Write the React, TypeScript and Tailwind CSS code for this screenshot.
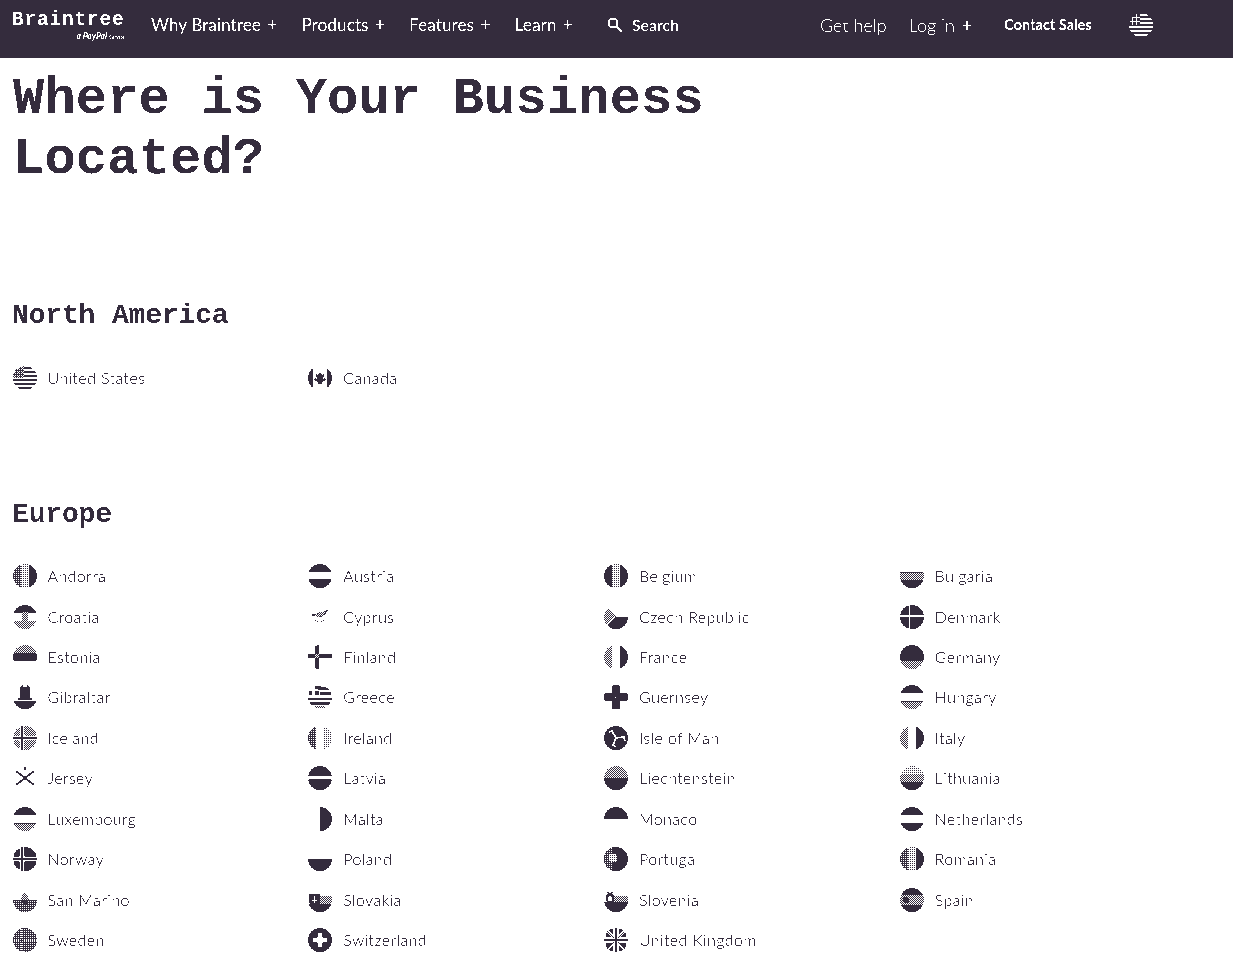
import React from 'react';

const D = '#342c3e';
const DOTS = 'url(#dots)';
const DENSE = 'url(#dense)';
const HEAVY = 'url(#heavy)';

const europe = [
  'Andorra', 'Austria', 'Belgium', 'Bulgaria',
  'Croatia', 'Cyprus', 'Czech Republic', 'Denmark',
  'Estonia', 'Finland', 'France', 'Germany',
  'Gibraltar', 'Greece', 'Guernsey', 'Hungary',
  'Iceland', 'Ireland', 'Isle of Man', 'Italy',
  'Jersey', 'Latvia', 'Liechtenstein', 'Lithuania',
  'Luxembourg', 'Malta', 'Monaco', 'Netherlands',
  'Norway', 'Poland', 'Portugal', 'Romania',
  'San Marino', 'Slovakia', 'Slovenia', 'Spain',
  'Sweden', 'Switzerland', 'United Kingdom',
];

// horizontal / vertical tricolours, fills listed in order
const H = (a: string, b: string, c: string) => (
  <>
    <rect width="24" height="8" fill={a} />
    <rect y="8" width="24" height="8" fill={b} />
    <rect y="16" width="24" height="8" fill={c} />
  </>
);
const V = (a: string, b: string, c: string) => (
  <>
    <rect width="8" height="24" fill={a} />
    <rect x="8" width="8" height="24" fill={b} />
    <rect x="16" width="8" height="24" fill={c} />
  </>
);
const W = 'none';

const flags: Record<string, React.ReactNode> = {
  'United States': (
    <>
      {[0, 4, 8, 12, 16, 20].map((y) => <rect key={y} x={y < 10 ? 11 : 0} y={y + 1} width="24" height="2" fill={D} />)}
      <rect width="11" height="12" fill={DENSE} />
      <path d="M0 4.500h11M0 8.500h11M3.500 0v12M7.500 0v12" stroke={D} strokeWidth="1" />
    </>
  ),
  Canada: (
    <>
      <rect width="5" height="24" fill={D} />
      <rect x="19" width="5" height="24" fill={D} />
      <path d="M12 6l2 3 2-1-1 5 2-1 1 2-4 2v2h-4v-2l-4-2 1-2 2 1-1-5 2 1z" fill={D} />
    </>
  ),
  Andorra: V(HEAVY, DOTS, D),
  Austria: <><rect width="24" height="7.500" fill={D} /><rect y="15.500" width="24" height="9" fill={D} /></>,
  Belgium: V(D, DOTS, D),
  Bulgaria: <>{H(W, DENSE, D)}<path d="M0 8.500h24" stroke={D} /></>,
  Croatia: (
    <>
      {H(D, W, DENSE)}
      <path d="M9 7h6v9l-3 3-3-3z" fill="#fff" />
      <path d="M9 7h6v9l-3 3-3-3z" fill={DENSE} />
    </>
  ),
  Cyprus: <path d="M4 10l5-1 3-2 4 0 4-2-3 4-3 2-3 1-3-1zM7 15l3 2M16 15l-3 2" fill={DENSE} stroke={D} strokeWidth="0.7" />,
  'Czech Republic': (
    <>
      <rect y="12" width="24" height="12" fill={D} />
      <path d="M0 0l12 12L0 24z" fill="#fff" />
      <path d="M0 0l12 12H0z" fill={DENSE} />
      <path d="M0 12h9L0 21z" fill={DENSE} />
    </>
  ),
  Denmark: <><rect width="24" height="24" fill={D} /><path d="M9.500 0v24M0 11h24" stroke="#fff" strokeWidth="2" /></>,
  Estonia: H(DENSE, D, W),
  Finland: (
    <>
      <path d="M9 0v24M0 11h24" stroke={D} strokeWidth="4" />
      <rect x="7" y="9" width="4" height="4" fill="#fff" />
      <rect x="7" y="9" width="4" height="4" fill={DENSE} />
    </>
  ),
  France: V(DENSE, W, D),
  Germany: <><rect width="24" height="16" fill={D} /><rect y="16" width="24" height="8" fill={DENSE} /></>,
  Gibraltar: (
    <>
      <path d="M8 0h2v2h4V0h2v2h1v12H7V2h1z" fill={D} />
      <path d="M5 13h14v2H5z" fill={D} />
      <rect y="16" width="24" height="8" fill={D} />
      <path d="M12 16v4" stroke="#fff" strokeWidth="1" />
    </>
  ),
  Greece: (
    <>
      <path d="M10 3.500h14M12 8.500h12M0 14h24M0 18.500h24" stroke={D} strokeWidth="2" />
      <path d="M7 1h6v3H7zM1 6h3v4H1zM7 6h4v4H7z" fill={D} />
      <rect x="7" y="21" width="10" height="2" fill={DENSE} />
    </>
  ),
  Guernsey: (
    <>
      <path d="M8 0h8v8h8v8h-8v8H8v-8H0V8h8z" fill={D} />
      <path d="M12 2v20M3 12h18" stroke="#fff" strokeWidth="1" strokeDasharray="1 1" />
    </>
  ),
  Hungary: <>{H(D, W, DENSE)}<path d="M0 16.500h24" stroke={D} /></>,
  Iceland: (
    <>
      <rect width="24" height="24" fill={DENSE} />
      <path d="M9 0v24M0 12h24" stroke="#fff" strokeWidth="5" />
      <path d="M9 0v24M0 12h24" stroke={D} strokeWidth="2.600" />
    </>
  ),
  Ireland: V(HEAVY, W, DOTS),
  'Isle of Man': (
    <>
      <rect width="24" height="24" fill={D} />
      <path d="M12 12L8 5l-3 1M12 12l8-1 1 4M12 12l-3 7 3 2" stroke="#fff" strokeWidth="1.700" fill="none" />
    </>
  ),
  Italy: V(DENSE, W, D),
  Jersey: (
    <>
      <path d="M3 5l18 14M21 5L3 19" stroke={D} strokeWidth="1.600" />
      <path d="M11 1h2v3h-2z" fill={D} />
    </>
  ),
  Latvia: <><rect width="24" height="9.700" fill={D} /><rect y="13.500" width="24" height="11" fill={D} /></>,
  Liechtenstein: <><rect width="24" height="12" fill={DENSE} /><rect y="12" width="24" height="12" fill={D} /></>,
  Lithuania: H(DOTS, DENSE, D),
  Luxembourg: <>{H(D, W, DENSE)}<path d="M0 16.500h24" stroke={D} /></>,
  Malta: <rect x="12" width="12" height="24" fill={D} />,
  Monaco: <rect width="24" height="12" fill={D} />,
  Netherlands: H(D, W, D),
  Norway: (
    <>
      <rect width="24" height="24" fill={D} />
      <path d="M9 0v24M0 12h24" stroke="#fff" strokeWidth="5" />
      <path d="M9 0v24M0 12h24" stroke={D} strokeWidth="2.400" />
    </>
  ),
  Poland: <rect y="12" width="24" height="12" fill={D} />,
  Portugal: (
    <>
      <rect width="24" height="24" fill={D} />
      <rect width="9" height="24" fill="#fff" />
      <rect width="9" height="24" fill={HEAVY} />
      <circle cx="9" cy="11" r="4.500" fill="#fff" />
      <circle cx="9" cy="11" r="4.500" fill={DOTS} />
    </>
  ),
  Romania: V(HEAVY, DOTS, D),
  'San Marino': (
    <>
      <rect y="12" width="24" height="12" fill={HEAVY} />
      <path d="M12 5l3 3 1 4-4 6-4-6 1-4z" fill={DENSE} />
    </>
  ),
  Slovakia: (
    <>
      <rect y="8" x="10" width="14" height="8" fill={DENSE} />
      <rect y="16" width="24" height="8" fill={D} />
      <path d="M1 6h11v9l-5.500 4L1 15z" fill={D} />
      <path d="M6.500 8v7M4 10h5M4 12.500h5" stroke="#fff" strokeWidth="1" />
    </>
  ),
  Slovenia: (
    <>
      <rect y="8" x="8" width="16" height="8" fill={DENSE} />
      <rect y="14" width="24" height="10" fill={D} />
      <circle cx="6" cy="10" r="4.500" fill={D} />
      <path d="M3 4l3 2 3-2" stroke={D} fill="none" />
      <circle cx="6" cy="10.500" r="2.500" fill="#fff" />
    </>
  ),
  Spain: (
    <>
      <rect width="24" height="6.500" fill={D} />
      <rect y="6.500" width="24" height="11" fill={DENSE} />
      <rect y="17.500" width="24" height="7" fill={D} />
      <circle cx="6" cy="12" r="3" fill={D} />
    </>
  ),
  Sweden: (
    <>
      <rect width="24" height="24" fill={HEAVY} />
      <path d="M9 0v24M0 12h24" stroke="#fff" strokeWidth="3" />
      <path d="M9 0v24M0 12h24" stroke={D} strokeWidth="3" strokeDasharray="1 1" />
    </>
  ),
  Switzerland: (
    <>
      <rect width="24" height="24" fill={D} />
      <path d="M9.500 5h5v4.500H19v5h-4.500V19h-5v-4.500H5v-5h4.500z" fill="#fff" />
    </>
  ),
  'United Kingdom': (
    <>
      <path d="M0 0l24 24M24 0L0 24" stroke={D} strokeWidth="1" />
      <path d="M2 3l6 6H2zM22 3l-6 6h6zM2 21l6-6H2zM22 21l-6-6h6zM9 1v6L4 1zM15 1v6l5-6zM9 23v-6l-5 6zM15 23v-6l5 6z" fill={D} />
      <path d="M12 0v24M0 12h24" stroke="#fff" strokeWidth="4" />
      <path d="M12 0v24M0 12h24" stroke={D} strokeWidth="2" />
    </>
  ),
};

const Flag = ({ name }: { name: string }) => {
  const id = 'clip-' + name.replace(/\s/g, '');
  return (
    <svg viewBox="0 0 24 24" width="24" height="24" className="shrink-0">
      <clipPath id={id}>
        <circle cx="12" cy="12" r="12" />
      </clipPath>
      <g clipPath={`url(#${id})`}>{flags[name]}</g>
    </svg>
  );
};

const Country = ({ name }: { name: string }) => (
  <a href="#" className="flex h-[40.45px] items-center gap-[11px] pl-[0.5px] text-[16px] font-light tracking-[0.4px] text-[#342c3e]">
    <Flag name={name} />
    <span>{name}</span>
  </a>
);

const NavItem = ({ label }: { label: string }) => (
  <a href="#" className="text-[17.300px] font-normal text-white">{label} <span className="ml-0.5">+</span></a>
);

export default function App() {
  return (
    <div className="min-h-[953px] overflow-hidden bg-white font-['Lato',sans-serif] [filter:url(#threshold)]">
      <svg width="0" height="0" className="absolute">
        <defs>
          <pattern id="dots" width="2" height="2" patternUnits="userSpaceOnUse">
            <rect width="1" height="1" fill={D} />
          </pattern>
          <pattern id="dense" width="2" height="2" patternUnits="userSpaceOnUse">
            <rect width="1" height="1" fill={D} />
            <rect x="1" y="1" width="1" height="1" fill={D} />
          </pattern>
          <pattern id="heavy" width="2" height="2" patternUnits="userSpaceOnUse">
            <rect width="2" height="1" fill={D} />
            <rect width="1" height="2" fill={D} />
          </pattern>
          {/* two-tone look of the reference */}
          <filter id="threshold" x="0" y="0" width="100%" height="100%" colorInterpolationFilters="sRGB">
            <feColorMatrix type="saturate" values="0" />
            <feComponentTransfer>
              <feFuncR type="discrete" tableValues="0.204 0.204 0.204 0.204 0.204 0.204 1 1 1 1" />
              <feFuncG type="discrete" tableValues="0.173 0.173 0.173 0.173 0.173 0.173 1 1 1 1" />
              <feFuncB type="discrete" tableValues="0.243 0.243 0.243 0.243 0.243 0.243 1 1 1 1" />
            </feComponentTransfer>
          </filter>
        </defs>
      </svg>

      <header className="flex h-[58px] items-center bg-[#342c3e] pb-2 pl-3 text-white">
        <div className="w-[139px] shrink-0">
          <div className="font-['Liberation_Mono',monospace] text-[19.500px] leading-[22px] font-bold tracking-[0.8px]">Braintree</div>
          <div className="w-[113px] text-right text-[8.500px] leading-[10px] font-bold"><i>a PayPal</i> <span className="text-[5px] font-normal">Service</span></div>
        </div>
        <nav className="flex gap-6">
          <NavItem label="Why Braintree" />
          <NavItem label="Products" />
          <NavItem label="Features" />
          <NavItem label="Learn" />
        </nav>
        <a href="#" className="ml-[34px] flex items-center gap-[9px] text-[16px]">
          <svg width="16" height="16" viewBox="0 0 16 16" fill="none" stroke="white" strokeWidth="2">
            <circle cx="6" cy="6" r="4.500" />
            <path d="M9.500 9.500L15 15" />
          </svg>
          Search
        </a>
        <div className="ml-[141px] flex items-center">
          <a href="#" className="text-[18px] font-light">Get help</a>
          <a href="#" className="ml-[22px] text-[18px] font-light">Log in <span className="ml-0.5 font-normal">+</span></a>
          <a href="#" className="ml-[32px] text-[14.500px] font-bold">Contact Sales</a>
          <span className="ml-[37px]">
            <svg viewBox="0 0 24 24" width="24" height="24">
              <clipPath id="nav-us"><circle cx="12" cy="12" r="12" /></clipPath>
              <g clipPath="url(#nav-us)" fill="white">
                {[1, 5, 9, 13, 17, 21].map((y) => <rect key={y} x={y < 10 ? 11 : 0} y={y} width="24" height="2" />)}
                <path d="M0 4.500h11M0 8.500h11M3.500 0v12M7.500 0v12" stroke="white" strokeWidth="1" />
              </g>
            </svg>
          </span>
        </div>
      </header>

      <main className="pl-3">
        <h1 className="ml-px w-[760px] pt-3 font-['Liberation_Mono',monospace] text-[52px] leading-[60px] font-bold tracking-[0.2px] text-[#342c3e]">
          Where is Your Business Located?
        </h1>

        <h2 className="mt-[108px] font-['Liberation_Mono',monospace] text-[28px] leading-[36px] font-bold tracking-[-0.15px] text-[#342c3e]">North America</h2>
        <div className="mt-6 grid w-[1183px] grid-cols-4">
          <Country name="United States" />
          <Country name="Canada" />
        </div>

        <h2 className="mt-[99px] font-['Liberation_Mono',monospace] text-[28px] leading-[36px] font-bold tracking-[-0.15px] text-[#342c3e]">Europe</h2>
        <div className="mt-[22.500px] grid w-[1183px] grid-cols-4">
          {europe.map((name) => <Country key={name} name={name} />)}
        </div>
      </main>
    </div>
  );
}
